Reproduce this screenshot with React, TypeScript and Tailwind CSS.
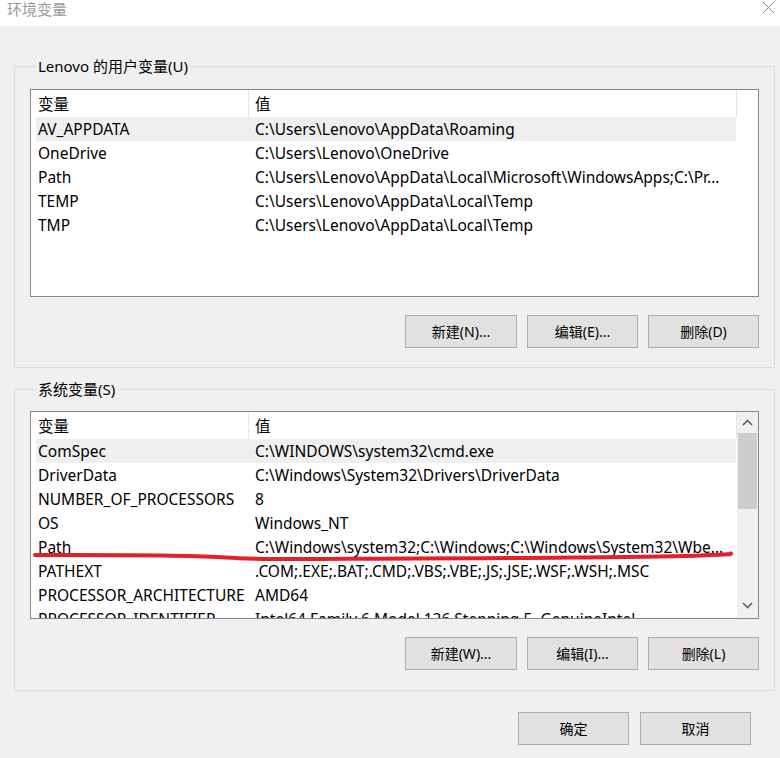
import React from "react";

type Row = { name: string; value: string; selected?: boolean; marked?: boolean };

const userVars: Row[] = [
  { name: "AV_APPDATA", value: "C:\\Users\\Lenovo\\AppData\\Roaming", selected: true },
  { name: "OneDrive", value: "C:\\Users\\Lenovo\\OneDrive" },
  { name: "Path", value: "C:\\Users\\Lenovo\\AppData\\Local\\Microsoft\\WindowsApps;C:\\Pr..." },
  { name: "TEMP", value: "C:\\Users\\Lenovo\\AppData\\Local\\Temp" },
  { name: "TMP", value: "C:\\Users\\Lenovo\\AppData\\Local\\Temp" },
];

const sysVars: Row[] = [
  { name: "ComSpec", value: "C:\\WINDOWS\\system32\\cmd.exe", selected: true },
  { name: "DriverData", value: "C:\\Windows\\System32\\Drivers\\DriverData" },
  { name: "NUMBER_OF_PROCESSORS", value: "8" },
  { name: "OS", value: "Windows_NT" },
  { name: "Path", value: "C:\\Windows\\system32;C:\\Windows;C:\\Windows\\System32\\Wbe...", marked: true },
  { name: "PATHEXT", value: ".COM;.EXE;.BAT;.CMD;.VBS;.VBE;.JS;.JSE;.WSF;.WSH;.MSC" },
  { name: "PROCESSOR_ARCHITECTURE", value: "AMD64" },
  { name: "PROCESSOR_IDENTIFIER", value: "Intel64 Family 6 Model 126 Stepping 5, GenuineIntel" },
];

function Button({ label, wide }: { label: string; wide?: boolean }) {
  return (
    <button
      className={`${wide ? "w-[112px]" : "w-[111px]"} h-[33px] bg-[#e1e1e1] border border-[#adadad] text-[14px] text-black flex items-center justify-center`}
    >
      {label}
    </button>
  );
}

function VarList({ rows, scroll }: { rows: Row[]; scroll?: boolean }) {
  return (
    <div className="relative w-[729px] h-[208px] border border-[#828790] bg-white flex overflow-hidden text-[15.5px]">
      <div className="flex-1 pl-[5px] overflow-hidden">
        {/* header */}
        <div className="flex h-[27px] w-[701px] items-center">
          <div className="w-[212px] h-full flex items-center pl-[2px] pt-[2px]">变量</div>
          <div className="w-[489px] h-full flex items-center pl-[6px] pt-[2px] border-l border-r border-[#e5e5e5]">值</div>
        </div>
        {rows.map((r) => (
          <div
            key={r.name}
            className={`relative flex h-[24px] w-[700px] items-center pt-[2px] whitespace-nowrap ${r.selected ? "bg-[#efefef]" : ""}`}
          >
            <div className="w-[212px] pl-[2px] overflow-hidden">{r.name}</div>
            <div className="w-[488px] pl-[7px] overflow-hidden">{r.value}</div>
            {r.marked && (
              <svg className="absolute left-0 top-0 overflow-visible" width="700" height="24">
                <path
                  d="M -1 20 C 80 20, 150 19.5, 190 22.5 S 300 23.5, 380 23.5 S 620 22, 664 20.5 S 690 19, 695 18.5"
                  fill="none"
                  stroke="#e3202a"
                  strokeWidth="4"
                  strokeLinecap="round"
                />
              </svg>
            )}
          </div>
        ))}
      </div>
      {scroll && (
        <div className="w-[21px] h-full bg-[#f0f0f0] flex flex-col items-center">
          <div className="h-[21px] w-full flex items-center justify-center">
            <svg width="11" height="7" viewBox="0 0 11 7">
              <path d="M1 6 L5.5 1.5 L10 6" fill="none" stroke="#606060" strokeWidth="1.6" />
            </svg>
          </div>
          <div className="w-[19px] h-[76px] bg-[#cdcdcd]" />
          <div className="flex-1" />
          <div className="h-[21px] w-full flex items-center justify-center mb-[2px]">
            <svg width="11" height="7" viewBox="0 0 11 7">
              <path d="M1 1 L5.5 5.5 L10 1" fill="none" stroke="#606060" strokeWidth="1.6" />
            </svg>
          </div>
        </div>
      )}
    </div>
  );
}

function Group({ title, children }: { title: string; children: React.ReactNode }) {
  return (
    <fieldset className="ml-[14px] w-[761px] border border-[#dcdcdc] pl-[15px]">
      <legend className="ml-[6px] px-[2px] h-[20px] leading-[20px] text-[15px]">{title}</legend>
      {children}
    </fieldset>
  );
}

export default function App() {
  return (
    <div className="w-[780px] h-[758px] bg-[#f0f0f0] overflow-hidden text-[15px] text-black font-['Noto_Sans','Noto_Sans_CJK_SC',sans-serif]">
      {/* title bar */}
      <div className="h-[26px] bg-white flex items-start justify-between">
        <div className="pl-[7px] text-[15px] leading-[18px] text-[#9a9a9a]">环境变量</div>
        <svg className="mr-[5px] mt-[1px]" width="13" height="13" viewBox="0 0 13 13">
          <path d="M1 1 L12 12 M12 1 L1 12" stroke="#8a8a8a" strokeWidth="1" />
        </svg>
      </div>

      <div className="pt-[30px]">
        <Group title="Lenovo 的用户变量(U)">
          <div className="pt-[13px]">
            <VarList rows={userVars} />
          </div>
          <div className="flex justify-end gap-[10px] w-[729px] mt-[18px] mb-[19px]">
            <Button label="新建(N)..." wide />
            <Button label="编辑(E)..." />
            <Button label="删除(D)" />
          </div>
        </Group>

        <div className="h-[11px]" />

        <Group title="系统变量(S)">
          <div className="pt-[12px]">
            <VarList rows={sysVars} scroll />
          </div>
          <div className="flex justify-end gap-[10px] w-[729px] mt-[18px] mb-[20px]">
            <Button label="新建(W)..." wide />
            <Button label="编辑(I)..." />
            <Button label="删除(L)" />
          </div>
        </Group>

        <div className="flex justify-end gap-[11px] pr-[29px] mt-[21px]">
          <Button label="确定" />
          <Button label="取消" />
        </div>
      </div>
    </div>
  );
}
